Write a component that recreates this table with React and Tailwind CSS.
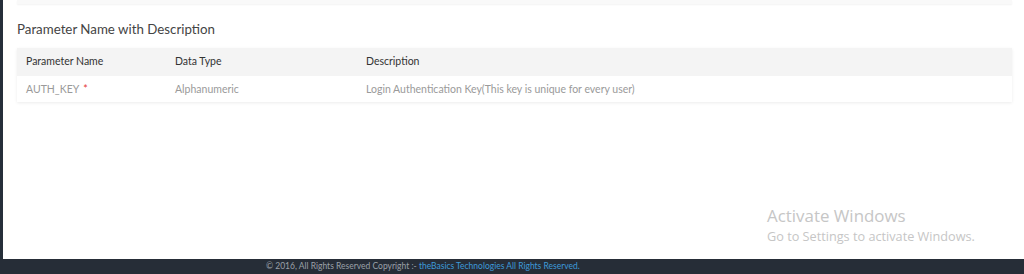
export default function App() {
  const rows = [
    { name: "AUTH_KEY", required: true, type: "Alphanumeric", desc: "Login Authentication Key(This key is unique for every user)" },
  ];

  return (
    <div className="relative flex h-[274px] w-[1024px] flex-col overflow-hidden bg-white font-['Lato',sans-serif]">
      <div className="flex flex-1">
        <div className="w-[3px] bg-[#262f3a]" />
        <div className="flex-1 pl-[14px] pr-[12px]">
          <div className="h-[4px] bg-[#f9f9f9] shadow-[0_1px_2px_rgba(0,0,0,0.05)]" />
          <h3 className="mt-[17px] text-[13.3px] leading-[16px] text-[#444]">Parameter Name with Description</h3>
          <table className="mt-[11px] w-full table-fixed border-collapse text-left text-[10.5px] shadow-[0_1px_3px_rgba(0,0,0,0.08)]">
            <colgroup>
              <col className="w-[158px]" />
              <col className="w-[191px]" />
              <col />
            </colgroup>
            <thead>
              <tr className="h-[28px] bg-[#f4f4f4] text-[#333]">
                <th className="pl-[9px] font-normal">Parameter Name</th>
                <th className="font-normal">Data Type</th>
                <th className="font-normal">Description</th>
              </tr>
            </thead>
            <tbody>
              {rows.map((row) => (
                <tr key={row.name} className="h-[26px] bg-white text-[#9a9a9a]">
                  <td className="pl-[9px] pt-[2px]">
                    {row.name}
                    {row.required && <span className="ml-[4px] text-[#e53935]">*</span>}
                  </td>
                  <td className="pt-[2px]">{row.type}</td>
                  <td className="pt-[2px]">{row.desc}</td>
                </tr>
              ))}
            </tbody>
          </table>
        </div>
      </div>
      <div className="flex h-[15px] items-center bg-[#262d37] pl-[266px] text-[8.5px] leading-none text-[#9aa0a8]">
        © 2016, All Rights Reserved Copyright :-&nbsp;<span className="text-[#3d9ad9]">theBasics Technologies All Rights Reserved.</span>
      </div>
      <div className="pointer-events-none absolute left-[767px] top-[205px] font-['Open_Sans',sans-serif] text-[#c6c6c6]">
        <div className="text-[16.9px] leading-[21px]">Activate Windows</div>
        <div className="mt-[2px] text-[12.7px] leading-[16px]">Go to Settings to activate Windows.</div>
      </div>
    </div>
  );
}
